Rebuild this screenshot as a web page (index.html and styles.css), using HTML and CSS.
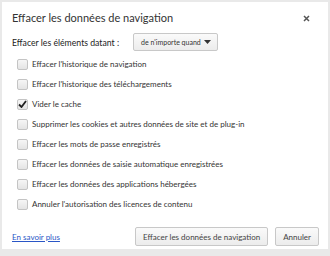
FILE: index.html
```html
<!DOCTYPE html>
<html lang="fr">
<head>
<meta charset="utf-8">
<link rel="stylesheet" href="styles.css">
</head>
<body>
<div class="dialog">
  <div class="header">
    <div class="title">Effacer les données de navigation</div>
    <div class="close">
      <svg width="7" height="7" viewBox="0 0 7 7"><path d="M1 1L6 6M6 1L1 6" stroke="#555" stroke-width="1.5"/></svg>
    </div>
  </div>
  <div class="period">
    <span class="period-label">Effacer les éléments datant :</span>
    <div class="select">
      <span>de n'importe quand</span>
      <svg width="7" height="4" viewBox="0 0 7 4"><path d="M0 0H7L3.5 4Z" fill="#333"/></svg>
    </div>
  </div>
  <ul class="options">
    <li><span class="box"></span>Effacer l'historique de navigation</li>
    <li><span class="box"></span>Effacer l'historique des téléchargements</li>
    <li><span class="box checked"><svg width="9" height="8" viewBox="0 0 9 8"><path d="M1 4.5L3.5 7L8 1" fill="none" stroke="#222" stroke-width="1.8"/></svg></span>Vider le cache</li>
    <li><span class="box"></span>Supprimer les cookies et autres données de site et de plug-in</li>
    <li><span class="box"></span>Effacer les mots de passe enregistrés</li>
    <li><span class="box"></span>Effacer les données de saisie automatique enregistrées</li>
    <li><span class="box"></span>Effacer les données des applications hébergées</li>
    <li><span class="box"></span>Annuler l'autorisation des licences de contenu</li>
  </ul>
  <div class="footer">
    <a class="more" href="#">En savoir plus</a>
    <div class="buttons">
      <button class="btn">Effacer les données de navigation</button>
      <button class="btn">Annuler</button>
    </div>
  </div>
</div>
</body>
</html>
```
FILE: styles.css
```css
html, body {
  margin: 0;
  padding: 0;
}
body {
  background: #e9e9e9;
  width: 330px;
  height: 256px;
  padding: 2px 2px 0 2px;
  box-sizing: border-box;
  font-family: Lato, "Noto Sans", sans-serif;
  color: #333;
}
.dialog {
  background: #fff;
  height: 247px;
  box-sizing: border-box;
  padding: 0 6px 0 10px;
  display: flex;
  flex-direction: column;
}
.header {
  display: flex;
  justify-content: space-between;
  align-items: center;
  height: 30px;
}
.title {
  font-size: 11px;
  color: #333;
}
.close {
  display: flex;
  margin-right: 12px;
  margin-top: 3px;
}
.period {
  display: flex;
  align-items: center;
  gap: 14px;
  height: 20px;
}
.period-label {
  font-size: 8.7px;
  color: #222;
}
.select {
  width: 85px;
  height: 18px;
  box-sizing: border-box;
  border: 1px solid #c8c8c8;
  border-radius: 2px;
  background: linear-gradient(#fafafa, #ececec);
  display: flex;
  align-items: center;
  justify-content: space-between;
  padding: 0 6px 0 7px;
  font-size: 7px;
  color: #333;
  white-space: nowrap;
  overflow: hidden;
}
.select svg {
  flex: none;
}
.options {
  list-style: none;
  margin: 2px 0 0 0;
  padding: 0 0 0 5px;
}
.options li {
  display: flex;
  align-items: center;
  height: 20px;
  font-size: 8px;
  color: #333;
}
.box {
  width: 9px;
  height: 9px;
  border: 1px solid #c4c4c4;
  border-radius: 2px;
  background: linear-gradient(#f6f6f6, #e4e4e4);
  margin-right: 4px;
  display: flex;
  align-items: center;
  justify-content: center;
  flex: none;
}
.footer {
  margin-top: auto;
  display: flex;
  justify-content: space-between;
  align-items: center;
  padding-bottom: 3px;
  padding-right: 3px;
}
.more {
  font-size: 8px;
  color: #2a56c6;
  text-decoration: underline;
}
.buttons {
  display: flex;
  gap: 7px;
}
.btn {
  font-family: inherit;
  font-size: 8px;
  color: #444;
  height: 19px;
  padding: 0 7px;
  border: 1px solid #c8c8c8;
  border-radius: 2px;
  background: linear-gradient(#fafafa, #ececec);
}
```
